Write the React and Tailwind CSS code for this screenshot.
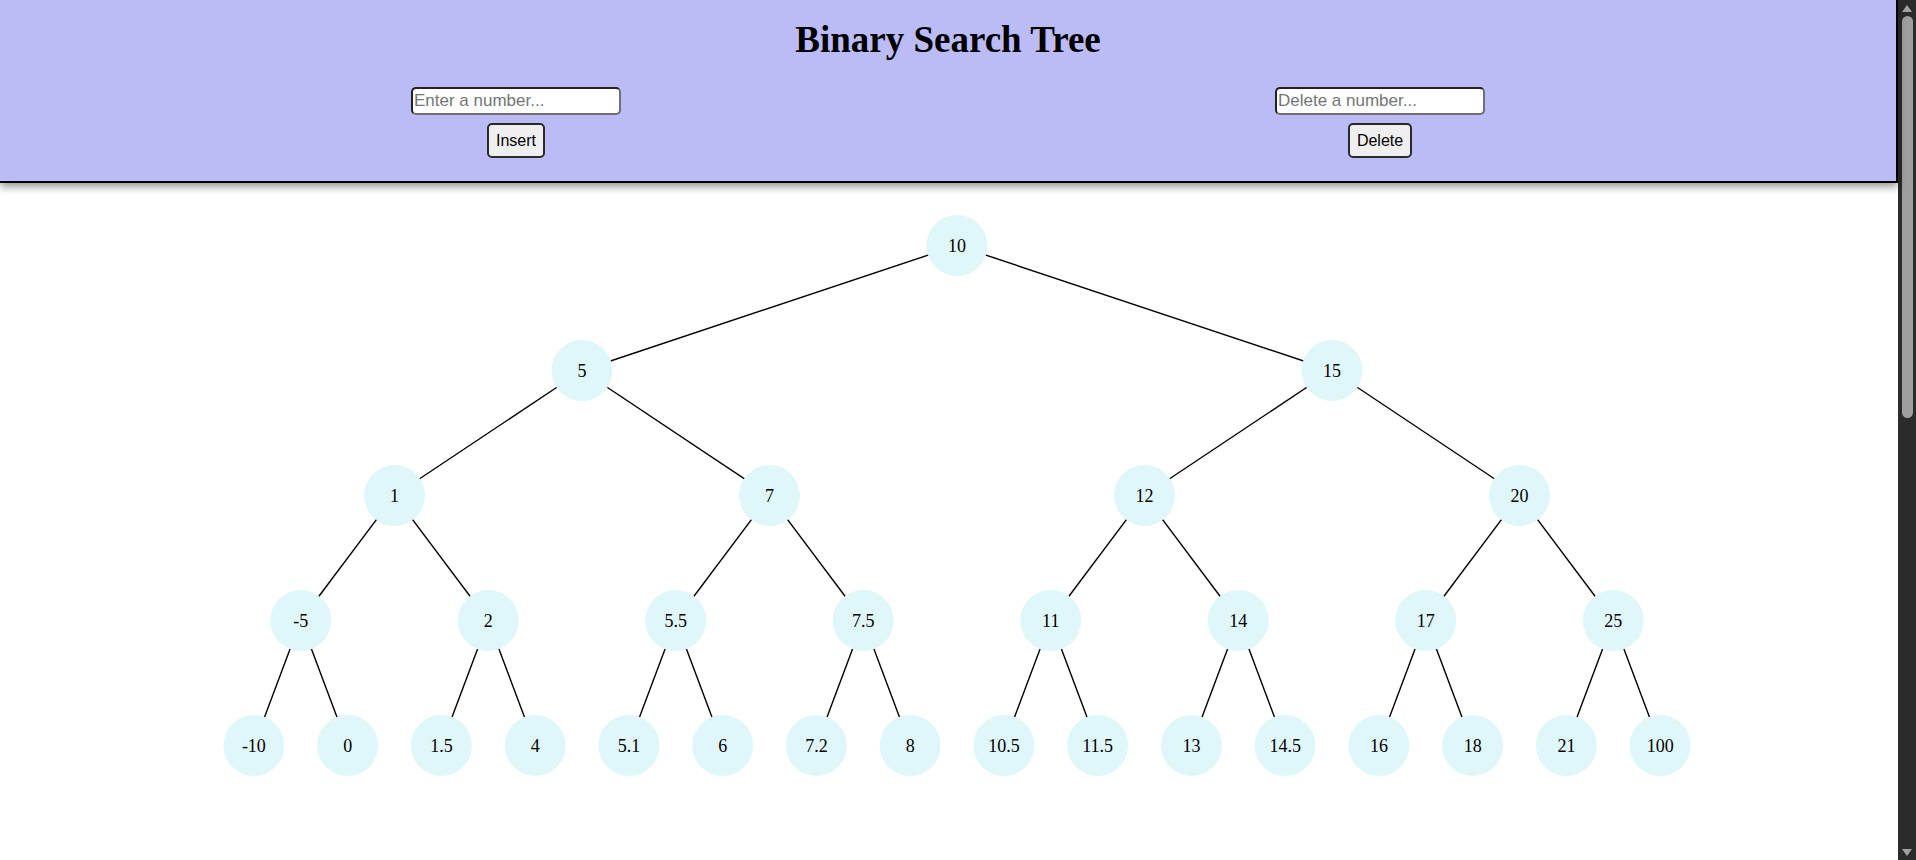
import React from 'react';

const VALUES = [10, 5, 15, 1, 7, 12, 20, -5, 2, 5.5, 7.5, 11, 14, 17, 25, -10, 0, 1.5, 4, 5.1, 6, 7.2, 8, 10.5, 11.5, 13, 14.5, 16, 18, 21, 100];

// plain BST insert, no balancing
const insert = (node, value) => {
  if (!node) return { value, left: null, right: null };
  if (value < node.value) node.left = insert(node.left, value);
  else node.right = insert(node.right, value);
  return node;
};

const buildTree = (values) => values.reduce((root, v) => insert(root, v), null);

// positions: root in the middle, each level halves the horizontal spread
const layout = (node, x, y, spread, nodes = [], edges = []) => {
  if (!node) return { nodes, edges };
  nodes.push({ value: node.value, x, y });
  const childY = y + 125;
  if (node.left) {
    edges.push({ x1: x, y1: y, x2: x - spread, y2: childY });
    layout(node.left, x - spread, childY, spread / 2, nodes, edges);
  }
  if (node.right) {
    edges.push({ x1: x, y1: y, x2: x + spread, y2: childY });
    layout(node.right, x + spread, childY, spread / 2, nodes, edges);
  }
  return { nodes, edges };
};

const Header = () => (
  <header className="relative z-10 flex h-[183px] flex-col items-center border-r-2 border-b-2 border-black bg-[#bbbbf5] shadow-[0_4px_8px_rgba(0,0,0,0.4)]">
    <h1 className="pt-[19px] text-[37px] leading-[42px] font-bold text-black [font-family:'Liberation_Serif',serif]">
      Binary Search Tree
    </h1>
    <div className="mt-[26px] flex w-full justify-center">
      <Control placeholder="Enter a number..." label="Insert" />
      <Control placeholder="Delete a number..." label="Delete" />
    </div>
  </header>
);

const Control = ({ placeholder, label }) => (
  <div className="flex w-[864px] flex-col items-center gap-2">
    <input
      type="text"
      placeholder={placeholder}
      className="h-[28px] w-[210px] rounded-[5px] border-2 border-t-[#222] border-l-[#222] border-r-[#6f6f6f] border-b-[#6f6f6f] bg-white pl-[1px] text-[17px] text-black outline-none placeholder:text-[#757575] [font-family:'Liberation_Sans',Arial,sans-serif]"
    />
    <button className="h-[35px] rounded-[5px] border-2 border-[#2a2a2a] bg-[#efefef] px-[7px] text-[16px] text-black [font-family:'Liberation_Sans',Arial,sans-serif]">
      {label}
    </button>
  </div>
);

const TreeView = () => {
  const { nodes, edges } = layout(buildTree(VALUES), 957, 62.5, 375);
  return (
    <svg className="block" width="1898" height="677">
      {edges.map((e, i) => (
        <line key={i} x1={e.x1} y1={e.y1} x2={e.x2} y2={e.y2} stroke="#000" strokeWidth="1.4" />
      ))}
      {nodes.map((n) => (
        <g key={n.value}>
          <circle cx={n.x} cy={n.y} r="30.5" fill="#e0f7fa" />
          <text
            x={n.x}
            y={n.y + 6}
            textAnchor="middle"
            fontSize="18"
            fill="#000"
            fontFamily="'Liberation Serif', serif"
          >
            {n.value}
          </text>
        </g>
      ))}
    </svg>
  );
};

// the browser's own scrollbar, as it shows in the screenshot
const Scrollbar = () => (
  <div className="flex w-[18px] shrink-0 flex-col bg-[#2b2b2b]">
    <div className="flex h-[16px] items-center justify-center">
      <svg width="10" height="7" viewBox="0 0 10 7">
        <path d="M5 0 L10 7 L0 7 Z" fill="#a3a3a3" />
      </svg>
    </div>
    <div className="flex-1">
      <div className="ml-[4px] h-[402px] w-[11px] rounded-[6px] bg-[#9f9f9f]" />
    </div>
    <div className="flex h-[16px] items-center justify-center">
      <svg width="10" height="7" viewBox="0 0 10 7">
        <path d="M0 0 L10 0 L5 7 Z" fill="#a3a3a3" />
      </svg>
    </div>
  </div>
);

export default function App() {
  return (
    <div className="flex h-[860px] overflow-hidden bg-white">
      <main className="w-[1898px] shrink-0">
        <Header />
        <TreeView />
      </main>
      <Scrollbar />
    </div>
  );
}
